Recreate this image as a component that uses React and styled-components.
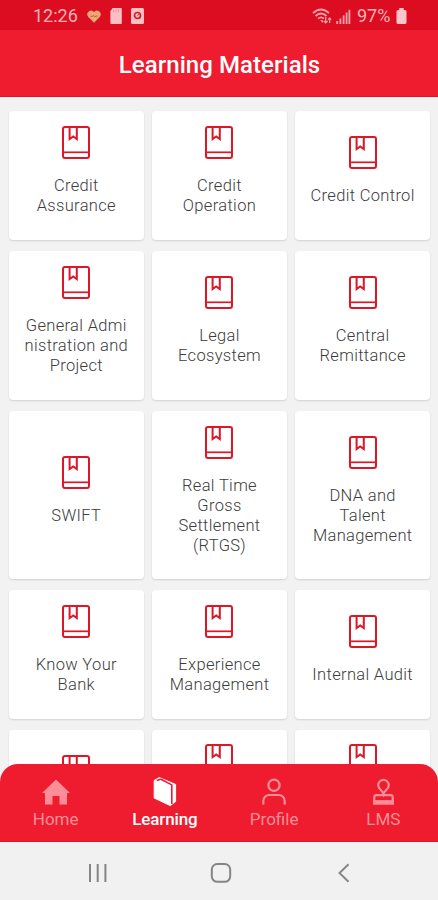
import React from 'react';
import styled, { createGlobalStyle } from 'styled-components';

const GlobalStyle = createGlobalStyle`
    *{
        box-sizing:border-box;
    }
    body{
        margin:0;
        background:#f2f2f2;
        font-family:Roboto, "Liberation Sans", sans-serif;
        overflow:hidden;
    }
    svg{
        display:block;
        flex:none;
    }
`;

const courses = [
    'Credit\nAssurance',
    'Credit\nOperation',
    'Credit Control',
    'General Admi\nnistration and\nProject',
    'Legal\nEcosystem',
    'Central\nRemittance',
    'SWIFT',
    'Real Time\nGross\nSettlement\n(RTGS)',
    'DNA and\nTalent\nManagement',
    'Know Your\nBank',
    'Experience\nManagement',
    'Internal Audit',
    '',
    '',
    '',
];

const BookIcon = () => (
    <svg width="28" height="33" viewBox="0 0 28 33" fill="none" stroke="#e01627" strokeWidth="2" strokeLinejoin="round">
        <rect x="1" y="1" width="26" height="31" rx="2" />
        <path d="M1 26.3h26" strokeWidth="1.7" />
        <path d="M7.6 1v12l3.6-2.6 3.6 2.6V1" strokeLinejoin="miter" />
    </svg>
);

const HomeIcon = () => (
    <svg width="30" height="30" viewBox="0 0 30 30" fill="currentColor">
        <path d="M15 2.5 29 16h-3v11.5h-7.5V19h-7v8.5H4V16H1z" />
    </svg>
);

const LearningIcon = () => (
    <svg width="30" height="32" viewBox="0 0 30 32" fill="#fff" stroke="#fff" strokeWidth="1" strokeLinejoin="round">
        <path d="M4.2 4.4 9.3 1.6 25.6 8.4v17.2l-5.4 4L4.2 22z" />
        <path d="M6.8 4.6 9.6 3.4q.9-.3 1.8.1l10.4 5.4V28" fill="none" stroke="#ee1c2e" strokeWidth="1.6" />
    </svg>
);

const ProfileIcon = () => (
    <svg width="30" height="30" viewBox="0 0 30 30" fill="none" stroke="currentColor" strokeWidth="2.2">
        <circle cx="15" cy="8.2" r="5.6" />
        <path d="M4.3 27.5V24a6 6 0 0 1 6-6h9.4a6 6 0 0 1 6 6v3.5" />
    </svg>
);

const LmsIcon = () => (
    <svg width="30" height="30" viewBox="0 0 30 30" fill="none" stroke="currentColor" strokeWidth="2.2">
        <path d="M15.5 16.8c-1-3.4-5.3-4.6-5.3-8.6a5.3 5.3 0 0 1 10.6 0c0 4-4.3 5.2-5.3 8.6z" />
        <path d="M6.3 27.5V20q0-1.9 1.9-1.9h14.6q1.9 0 1.9 1.9v7.5" />
        <path d="M5.2 25.4h20.6" strokeWidth="4.6" />
    </svg>
);

const HeartIcon = () => (
    <svg width="14" height="13" viewBox="0 0 14 13">
        <path d="M7 12.7 1.3 6.9A3.7 3.7 0 0 1 7 2a3.7 3.7 0 0 1 5.7 4.9z" fill="#f0a873" />
        <path d="M3.5 6.3h2l1-.9 1.3 1.6 1-.9h1.7" fill="none" stroke="#cf4a3a" strokeWidth=".9" />
    </svg>
);

const SdIcon = () => (
    <svg width="12" height="16" viewBox="0 0 12 16">
        <path d="M2.8 0H11a.8.8 0 0 1 .8.8v14.4a.8.8 0 0 1-.8.8H1.2a.8.8 0 0 1-.8-.8V3z" fill="#fbc0c4" />
        <path d="M3.5 1.2v3M6 1.2v3M8.5 1.2v3" stroke="#ed8b93" strokeWidth=".9" />
    </svg>
);

const StorageIcon = () => (
    <svg width="13" height="16" viewBox="0 0 13 16">
        <rect width="13" height="16" rx="1.5" fill="#fbc0c4" />
        <circle cx="6.5" cy="7.5" r="3" fill="none" stroke="#d51c2c" strokeWidth="1.7" />
        <path d="m6.5 7.5 2-1.5" stroke="#d51c2c" />
    </svg>
);

const WifiIcon = () => (
    <svg width="20" height="17" viewBox="0 0 20 17" fill="none" stroke="#f5a3a9" strokeWidth="1.8">
        <path d="M1 5.2q8-7.4 16 0" />
        <path d="M3.5 8q5.5-5 11 0" />
        <path d="M6 10.7q3-2.7 6 0" />
        <path d="M8 12.2h3v2.8z" fill="#f5a3a9" stroke="none" />
        <path d="M13.7 9v6M11.8 13l1.9 2 1.9-2M17.7 15v-5M16.2 11.7l1.5-1.7 1.5 1.7" strokeWidth="1.2" />
    </svg>
);

const SignalIcon = () => (
    <svg width="15" height="15" viewBox="0 0 15 15" stroke="#f5a3a9" strokeWidth="1.8">
        <path d="M1.2 15v-3M4.4 15V9.5M7.6 15V6.5M10.6 15V3.5M13.4 15V.7" />
    </svg>
);

const BatteryIcon = () => (
    <svg width="11" height="16" viewBox="0 0 11 16">
        <path d="M3.3 0h4.4v2H9a1.5 1.5 0 0 1 1.5 1.5v11A1.5 1.5 0 0 1 9 16H2a1.5 1.5 0 0 1-1.5-1.5v-11A1.5 1.5 0 0 1 2 2h1.3z" fill="#fcc5c9" />
    </svg>
);

const tabs = [
    { label: 'Home', icon: <HomeIcon /> },
    { label: 'Learning', icon: <LearningIcon />, active: true },
    { label: 'Profile', icon: <ProfileIcon /> },
    { label: 'LMS', icon: <LmsIcon /> },
];

function App() {
    return (
        <>
            <GlobalStyle />
            <Screen>
                {/* Status Bar */}
                <StatusBar>
                    <StatusGroup $gap="9px">
                        <Clock>12:26</Clock>
                        <HeartIcon />
                        <SdIcon />
                        <StorageIcon />
                    </StatusGroup>
                    <StatusGroup $gap="4px">
                        <WifiIcon />
                        <SignalIcon />
                        <Percent>97%</Percent>
                        <BatteryIcon />
                    </StatusGroup>
                </StatusBar>
                <Header>Learning Materials</Header>

                {/* Course Cards */}
                <Content>
                    <CardGrid>
                        {courses.map((name, i) => (
                            <Card key={i} $lift={i > 12}>
                                <BookIcon />
                                <CardTitle>{name}</CardTitle>
                            </Card>
                        ))}
                    </CardGrid>
                </Content>

                {/* Bottom Tabs */}
                <TabBar>
                    {tabs.map((tab) => (
                        <Tab key={tab.label} $active={tab.active}>
                            <TabIcon>{tab.icon}</TabIcon>
                            <span>{tab.label}</span>
                        </Tab>
                    ))}
                </TabBar>
                <SystemBar>
                    <svg width="20" height="20" viewBox="0 0 20 20" stroke="#858585" strokeWidth="2">
                        <path d="M2 1v18M9.7 1v18M17.4 1v18" />
                    </svg>
                    <svg width="22" height="20" viewBox="0 0 22 20" fill="none" stroke="#858585" strokeWidth="2">
                        <rect x="1.8" y="1" width="18.4" height="17.8" rx="5.5" />
                    </svg>
                    <svg width="20" height="20" viewBox="0 0 20 20" fill="none" stroke="#858585" strokeWidth="1.9">
                        <path d="M14.5 1.2 5.5 10l9 8.8" />
                    </svg>
                </SystemBar>
            </Screen>
        </>
    );
}

const Screen = styled.div`
    display:flex;
    flex-direction:column;
    width:438px;
    height:900px;
    overflow:hidden;
    background:#f2f2f2;
`;

const StatusBar = styled.div`
    display:flex;
    flex:none;
    justify-content:space-between;
    align-items:center;
    height:30px;
    padding:2px 31px 0 33px;
    background:#dc0d20;
    color:#f9b3b8;
`;

const StatusGroup = styled.div`
    display:flex;
    align-items:center;
    gap:${(props) => props.$gap};
`;

const Clock = styled.span`
    font-size:18px;
    line-height:20px;
    width:45px;
    white-space:nowrap;
`;

const Percent = styled.span`
    font-size:18px;
    line-height:20px;
    width:34px;
    margin-left:2px;
    margin-right:1px;
    white-space:nowrap;
`;

const Header = styled.header`
    display:flex;
    flex:none;
    align-items:center;
    justify-content:center;
    height:67px;
    padding:4px 0 0 1px;
    background:#ee1c2e;
    border-bottom:1px solid #d81528;
    color:#fff;
    font-size:24px;
    font-weight:500;
    letter-spacing:.06px;
`;

const Content = styled.main`
    flex:1;
    min-height:0;
    padding:14.4px 8px 0 9px;
`;

const CardGrid = styled.div`
    display:grid;
    grid-template-columns:repeat(3, 1fr);
    grid-template-rows:128.5px 148.5px 168.5px 128.5px 128.5px;
    gap:11.2px 8.5px;
`;

const Card = styled.div`
    display:flex;
    flex-direction:column;
    align-items:center;
    justify-content:${(props) => (props.$lift ? 'flex-start' : 'center')};
    padding-top:${(props) => (props.$lift ? '14px' : '0')};
    background:#fff;
    border-radius:4px;
    box-shadow:0 1px 2px rgba(0,0,0,.14);
`;

const CardTitle = styled.div`
    min-height:20px;
    margin:17px 0 9px;
    color:#3c3c3c;
    font-size:16.5px;
    font-weight:300;
    line-height:20px;
    letter-spacing:.33px;
    text-align:center;
    white-space:pre;
`;

const TabBar = styled.nav`
    position:relative;
    display:grid;
    flex:none;
    grid-template-columns:repeat(4, 1fr);
    height:78px;
    margin-top:-20px;
    padding-left:1px;
    background:#ee1c2e;
    border-bottom:1px solid #d81528;
    border-radius:18px 18px 0 0;
`;

const Tab = styled.div`
    display:flex;
    flex-direction:column;
    align-items:center;
    padding-top:11px;
    color:${(props) => (props.$active ? '#fff' : '#f98e98')};
    font-size:17px;
    font-weight:${(props) => (props.$active ? 500 : 400)};
    line-height:22px;
    letter-spacing:${(props) => (props.$active ? '-.15px' : '0')};
`;

const TabIcon = styled.div`
    display:flex;
    align-items:center;
    justify-content:center;
    height:33px;
`;

const SystemBar = styled.div`
    display:grid;
    flex:none;
    grid-template-columns:repeat(3, 123px);
    justify-content:center;
    align-items:center;
    justify-items:center;
    height:58px;
    padding:4px 0 0 3px;
    background:#f1f1f1;
`;

export default App;
